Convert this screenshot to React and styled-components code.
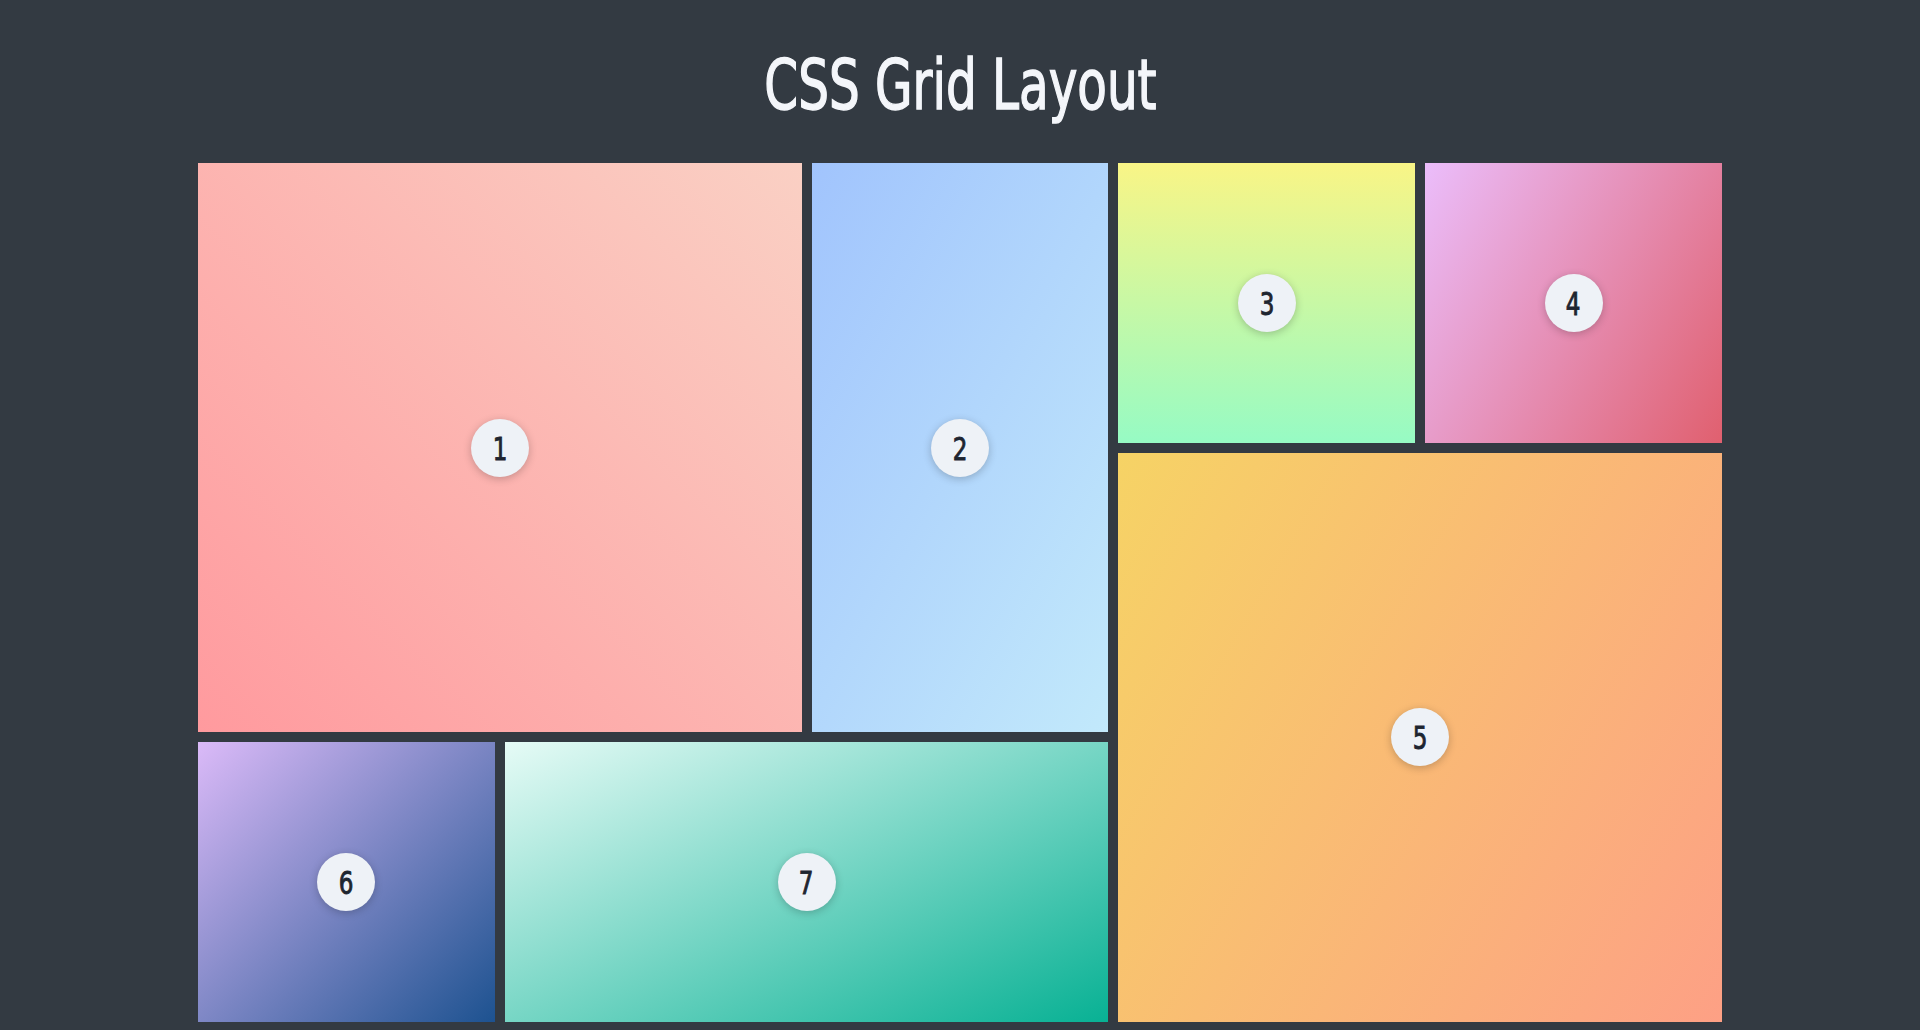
import React from 'react'
import styled, { createGlobalStyle } from 'styled-components'

const tiles = [
  { n: 1, cols: 2, rows: 2, bg: 'linear-gradient(45deg, #ff9a9e 0%, #fad0c4 100%)' },
  { n: 2, cols: 1, rows: 2, bg: 'linear-gradient(120deg, #a1c4fd 0%, #c2e9fb 100%)' },
  { n: 3, cols: 1, rows: 1, bg: 'linear-gradient(to top, #96fbc4 0%, #f9f586 100%)' },
  { n: 4, cols: 1, rows: 1, bg: 'linear-gradient(120deg, #ebbdfb 0%, #e0606f 100%)' },
  { n: 5, cols: 2, rows: 2, bg: 'linear-gradient(120deg, #f6d365 0%, #fda085 100%)' },
  { n: 6, cols: 1, rows: 1, bg: 'linear-gradient(135deg, #dbbaf8 0%, #1d5290 100%)' },
  { n: 7, cols: 2, rows: 1, bg: 'linear-gradient(155deg, #e6fbf6 0%, #08b194 100%)' },
]

const App = () => {
  return (
    <>
      <GlobalStyle />
      <Page>
        <Header>
          <Title>CSS Grid Layout</Title>
        </Header>
        <Grid>
          {tiles.map((t) => (
            <Tile key={t.n} $cols={t.cols} $rows={t.rows} $bg={t.bg}>
              <Badge>
                <Num>{t.n}</Num>
              </Badge>
            </Tile>
          ))}
        </Grid>
      </Page>
    </>
  )
}

const GlobalStyle = createGlobalStyle`
    html, body{
        margin: 0;
        padding: 0;
        background: #333a42;
        overflow: hidden;
    }
`

const Page = styled.div`
    width: 1524px;
    margin: 0 auto;
    display: flex;
    flex-direction: column;
    font-family: "DejaVu Sans Condensed", "DejaVu Sans", sans-serif;
`

const Header = styled.header`
    height: 163px;
    display: flex;
    align-items: center;
    justify-content: center;
    padding-top: 8px;
    box-sizing: border-box;
`

const Title = styled.h1`
    margin: 0;
    color: #f4f6fa;
    font-size: 69px;
    font-weight: 400;
    line-height: 1;
    -webkit-text-stroke: 1.4px #f4f6fa;
    transform: scaleX(0.78);
    white-space: nowrap;
`

const Grid = styled.div`
    display: grid;
    grid-template-columns: repeat(5, 1fr);
    grid-auto-rows: 279.6px;
    gap: 10px;
`

const Tile = styled.div`
    grid-column: span ${(p) => p.$cols};
    grid-row: span ${(p) => p.$rows};
    background: ${(p) => p.$bg};
    display: flex;
    align-items: center;
    justify-content: center;
`

const Badge = styled.span`
    width: 58px;
    height: 58px;
    border-radius: 50%;
    background: #eef2f7;
    box-shadow: 0 2px 8px rgba(0, 0, 0, 0.22);
    display: flex;
    align-items: center;
    justify-content: center;
`

const Num = styled.span`
    color: #1e2530;
    font-size: 32px;
    font-weight: 400;
    line-height: 1;
    -webkit-text-stroke: 0.9px #1e2530;
    transform: scaleX(0.8);
    margin-top: 2px;
`

export default App
